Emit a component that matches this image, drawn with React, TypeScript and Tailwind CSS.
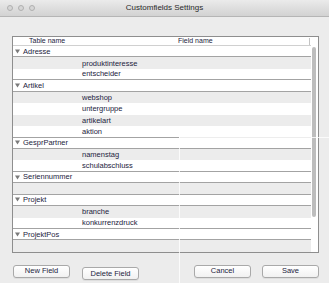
import React from 'react';

type Group = { name: string; fields: string[] };

const groups: Group[] = [
  { name: 'Adresse', fields: ['produktinteresse', 'entscheider'] },
  { name: 'Artikel', fields: ['webshop', 'untergruppe', 'artikelart', 'aktion'] },
  { name: 'GesprPartner', fields: ['namenstag', 'schulabschluss'] },
  { name: 'Seriennummer', fields: [''] },
  { name: 'Projekt', fields: ['branche', 'konkurrenzdruck'] },
  { name: 'ProjektPos', fields: [''] },
];

const Disclosure = () => (
  <svg width="5" height="5" viewBox="0 0 5 5" className="mr-[3px]">
    <path d="M0 0.5 L5 0.5 L2.5 4.5 Z" fill="#7a7a7a" />
  </svg>
);

const MacButton: React.FC<{ label: string }> = ({ label }) => (
  <button className="h-[13px] w-[57px] rounded-[3px] border border-[#a9a9a9] bg-gradient-to-b from-white to-[#f1f1f1] text-[7.5px] leading-none text-[#1c2340] shadow-[0_1px_0_rgba(0,0,0,0.06)]">
    {label}
  </button>
);

export default function App() {
  return (
    <div
      className="relative h-[289px] w-[335px] overflow-hidden bg-white"
      style={{ fontFamily: '"Liberation Sans", Arial, sans-serif' }}
    >
      <div className="flex h-[283px] w-[329px] flex-col bg-[#ececec]">
        {/* Title bar */}
        <div className="relative flex h-[17px] items-center justify-center border-b border-[#b5b5b5] bg-gradient-to-b from-[#ebebeb] to-[#d2d2d2]">
          <div className="absolute left-[7px] top-[5px] flex gap-[5px]">
            <span className="h-[6px] w-[6px] rounded-full border border-[#b0b0b0] bg-[#d6d6d6]" />
            <span className="h-[6px] w-[6px] rounded-full border border-[#b0b0b0] bg-[#d6d6d6]" />
            <span className="h-[6px] w-[6px] rounded-full border border-[#b0b0b0] bg-[#d6d6d6]" />
          </div>
          <span className="text-[8px] text-[#2a2a2a]">Customfields Settings</span>
        </div>

        {/* Content */}
        <div className="flex flex-1 flex-col pl-[12px] pr-[10px] pt-[19px]">
          <div className="flex h-[217px] border border-[#8e8e8e] bg-white">
            <div className="flex flex-1 flex-col">
              {/* Header */}
              <div className="flex h-[9px] items-center border-b border-[#d0d0d0] text-[7px] text-[#1c2340]">
                <span className="w-[165px] pl-[16px]">Table name</span>
                <span className="flex-1">Field name</span>
                <span className="mr-[1px] h-[7px] w-px bg-[#c4c4c4]" />
              </div>
              {/* Rows */}
              {groups.map((g) => (
                <React.Fragment key={g.name}>
                  <div className="flex h-[11.45px] items-center border-b border-[#a3a3a3] pl-[2px] text-[7.5px] text-[#1c2340]">
                    <Disclosure />
                    {g.name}
                  </div>
                  {g.fields.map((f, i) => (
                    <div
                      key={g.name + i}
                      className={`flex h-[11.45px] items-center pl-[69px] text-[7.5px] text-[#1c2340] ${
                        i % 2 === 0 ? 'bg-[#ececec]' : 'bg-white'
                      } ${i === g.fields.length - 1 && g.name !== 'ProjektPos' ? 'border-b border-[#a3a3a3]' : ''}`}
                    >
                      {f}
                    </div>
                  ))}
                </React.Fragment>
              ))}
            </div>
            {/* Scrollbar */}
            <div className="flex w-[7px] flex-col pt-[10px]">
              <div className="ml-[1px] h-[170px] w-[4px] rounded-[2px] bg-[#bdbdbd]" />
            </div>
          </div>

          {/* Buttons */}
          <div className="mt-[6px] flex items-center pl-px">
            <MacButton label="New Field" />
            <div className="ml-[12px]">
              <MacButton label="Delete Field" />
            </div>
            <div className="ml-auto flex gap-[11px]">
              <MacButton label="Cancel" />
              <MacButton label="Save" />
            </div>
          </div>
        </div>
      </div>

      {/* screen artifact lines */}
      <div className="pointer-events-none absolute left-[179px] top-[137px] h-[152px] w-px bg-white/80" />
      <div className="pointer-events-none absolute left-[179px] top-[137px] h-px w-[152px] bg-white/80" />
    </div>
  );
}
